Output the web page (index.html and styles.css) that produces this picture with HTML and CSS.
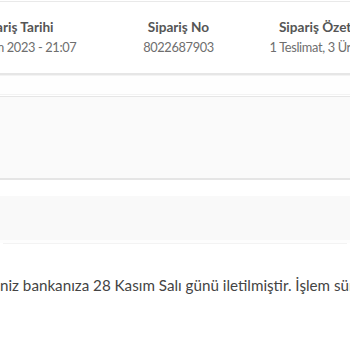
FILE: index.html
```html
<!DOCTYPE html>
<html lang="tr">
<head>
<meta charset="utf-8">
<title>Sipariş Detayı</title>
<link rel="stylesheet" href="styles.css">
</head>
<body>
  <div class="order-card">
    <div class="order-meta">
      <div class="meta-col">
        <div class="meta-label">Sipariş Tarihi</div>
        <div class="meta-value">28 Kasım 2023 - 21:07</div>
      </div>
      <div class="meta-col">
        <div class="meta-label">Sipariş No</div>
        <div class="meta-value">8022687903</div>
      </div>
      <div class="meta-col">
        <div class="meta-label">Sipariş Özeti</div>
        <div class="meta-value">1 Teslimat, 3 Ürün</div>
      </div>
    </div>
  </div>
  <div class="gap"></div>
  <section class="panel"></section>
  <div class="band"></div>
  <p class="notice">niz bankanıza 28 Kasım Salı günü iletilmiştir. İşlem süresi bankanıza bağlı olarak değişebilir.</p>
</body>
</html>
```

FILE: styles.css
```css
html, body {
  margin: 0;
  padding: 0;
  overflow: hidden;
  background: #ffffff;
}

body {
  font-family: Lato, "Open Sans", sans-serif;
  color: #444;
}

.order-card {
  margin-top: 1px;
  border-top: 1px solid #e9e9e9;
  border-bottom: 2px solid #e6e6e6;
  padding: 16px 0 17px;
}

.order-meta {
  display: grid;
  grid-template-columns: 163px 163px 114px;
  margin-left: -66px;
  width: 440px;
}

.meta-col {
  text-align: center;
  white-space: nowrap;
}

.meta-label {
  font-size: 13.6px;
  line-height: 18px;
  font-weight: 700;
  color: #555;
}

.meta-value {
  margin-top: 2px;
  font-size: 12.8px;
  line-height: 18px;
  letter-spacing: -0.35px;
  color: #6e6e6e;
}

.gap {
  height: 18px;
  border-top: 1px solid #f3f3f3;
  border-bottom: 1px solid #f3f3f3;
  margin-bottom: 1px;
  background: #fefefe;
}

.panel {
  border-top: 1px solid #e6e6e6;
  border-bottom: 2px solid #e5e5e5;
  background: #fafafa;
  height: 81px;
}

.band {
  margin-top: 16px;
  height: 44px;
  background: #f9f9f9;
  border-bottom: 3px solid #fdfdfd;
  box-shadow: 0 4px 0 -3px #f3f3f3;
}

.notice {
  margin: 32px 0 0;
  font-size: 15.2px;
  line-height: 20px;
  color: #444;
  white-space: nowrap;
}
```
